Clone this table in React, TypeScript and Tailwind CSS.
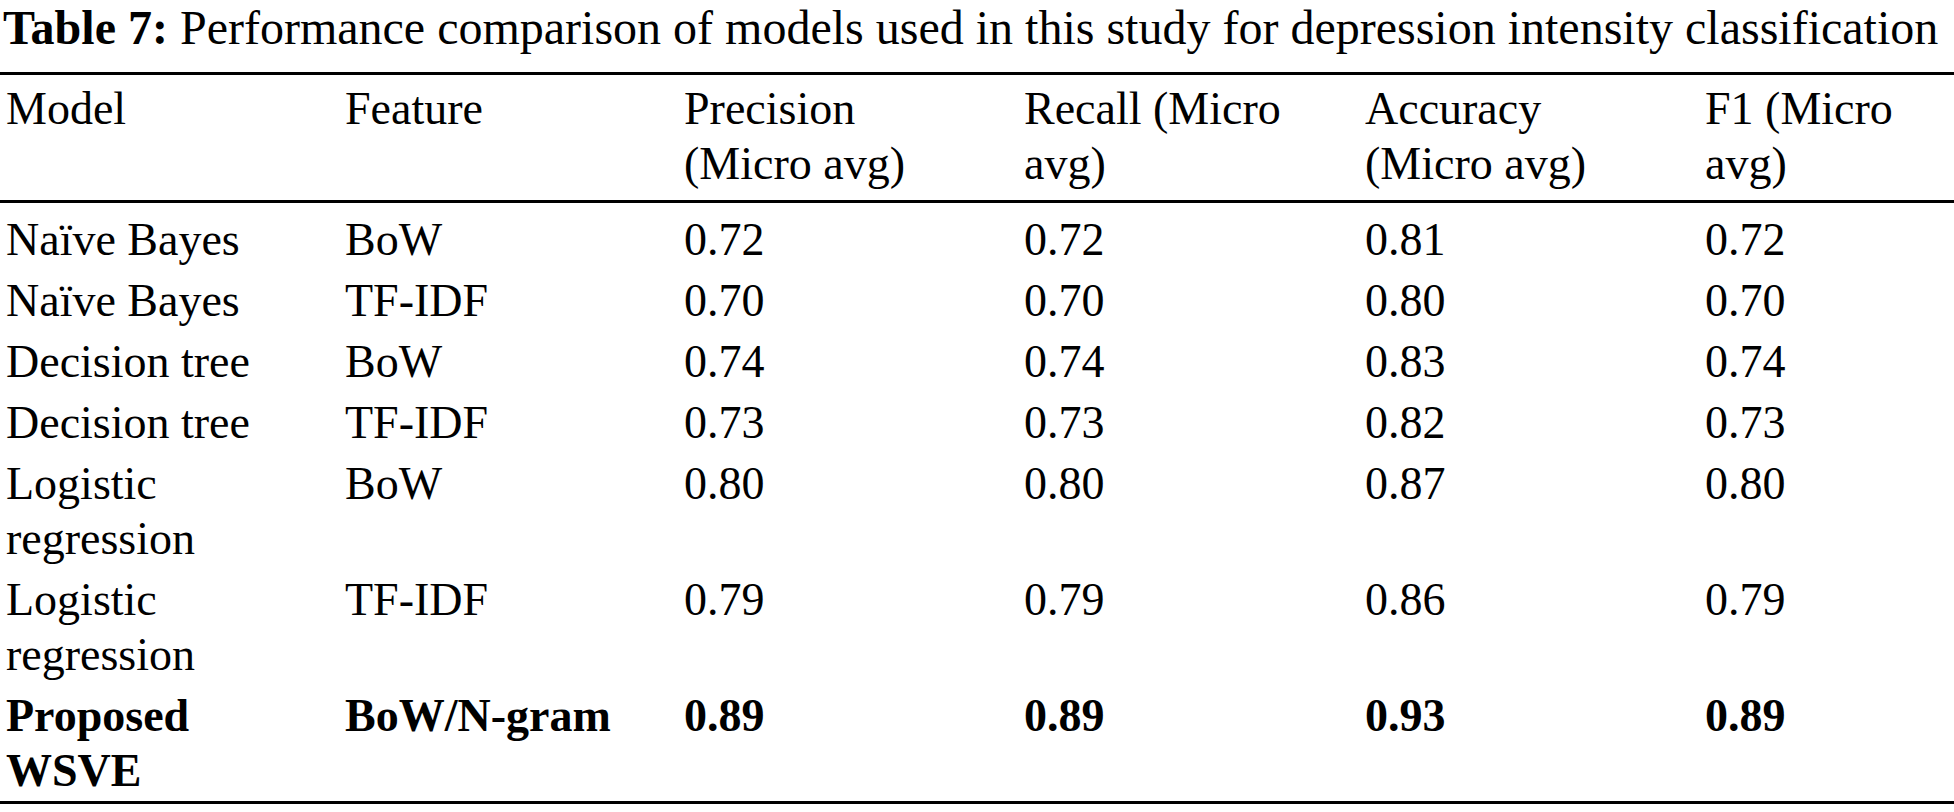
import React from "react";

const rows: { model: string; feature: string; vals: string[]; bold?: boolean }[] = [
  { model: "Naïve Bayes", feature: "BoW", vals: ["0.72", "0.72", "0.81", "0.72"] },
  { model: "Naïve Bayes", feature: "TF-IDF", vals: ["0.70", "0.70", "0.80", "0.70"] },
  { model: "Decision tree", feature: "BoW", vals: ["0.74", "0.74", "0.83", "0.74"] },
  { model: "Decision tree", feature: "TF-IDF", vals: ["0.73", "0.73", "0.82", "0.73"] },
  { model: "Logistic regression", feature: "BoW", vals: ["0.80", "0.80", "0.87", "0.80"] },
  { model: "Logistic regression", feature: "TF-IDF", vals: ["0.79", "0.79", "0.86", "0.79"] },
  { model: "Proposed WSVE", feature: "BoW/N-gram", vals: ["0.89", "0.89", "0.93", "0.89"], bold: true },
];

const headers = ["Model", "Feature", "Precision (Micro avg)", "Recall (Micro avg)", "Accuracy (Micro avg)", "F1 (Micro avg)"];

const grid = "grid grid-cols-[339px_339px_340px_341px_340px_1fr]";

export default function App() {
  return (
    <div
      className="w-[1954px] h-[812px] bg-white text-black overflow-hidden"
      style={{ fontFamily: '"Liberation Serif", "Times New Roman", serif' }}
    >
      <div className="h-[72px] pl-[3px] pr-[8px] text-[48px] leading-[55px] whitespace-nowrap">
        <span className="font-bold">Table 7:</span> Performance comparison of models used in this study for depression intensity classification
      </div>
      <div className="h-[3px] bg-black" />
      <div className={`${grid} pt-[6px] pb-[9px] text-[46px] leading-[55px]`}>
        {headers.map((h) => (
          <div key={h} className="pl-[6px] pr-[44px]">
            {h}
          </div>
        ))}
      </div>
      <div className="h-[3px] bg-black" />
      <div className="pt-[6px] text-[46px] leading-[55px]">
        {rows.map((r, i) => (
          <div key={i} className={`${grid} py-[3px] ${r.bold ? "font-bold" : ""}`}>
            <div className="pl-[6px] pr-[44px]">{r.model}</div>
            <div className="pl-[6px] pr-[44px]">{r.feature}</div>
            {r.vals.map((v, j) => (
              <div key={j} className="pl-[6px] pr-[44px]">
                {v}
              </div>
            ))}
          </div>
        ))}
      </div>
      <div className="h-[3px] bg-black" />
    </div>
  );
}
